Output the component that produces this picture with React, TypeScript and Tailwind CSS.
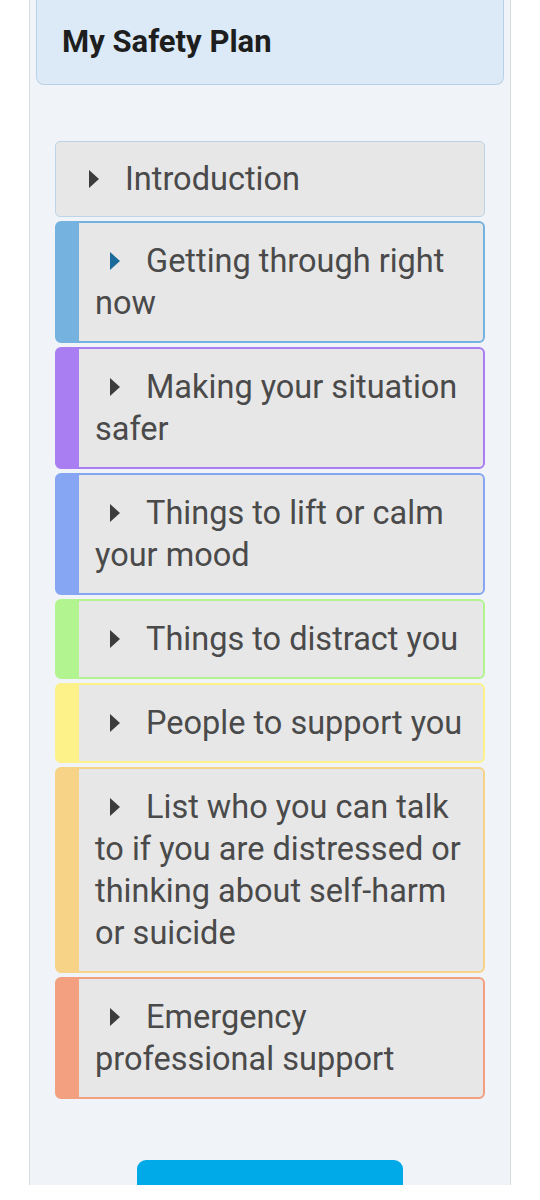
const sections = [
  { title: 'Getting through right now', bar: 'border-[#76b2e0]', arrow: 'border-l-[#1b6a9a]' },
  { title: 'Making your situation safer', bar: 'border-[#a97ef3]', arrow: 'border-l-[#3c3c3c]' },
  { title: 'Things to lift or calm your mood', bar: 'border-[#86a6f4]', arrow: 'border-l-[#3c3c3c]' },
  { title: 'Things to distract you', bar: 'border-[#b2f48f]', arrow: 'border-l-[#3c3c3c]' },
  { title: 'People to support you', bar: 'border-[#fdf189]', arrow: 'border-l-[#3c3c3c]' },
  {
    title: 'List who you can talk to if you are distressed or thinking about self-harm or suicide',
    bar: 'border-[#f7d387]',
    arrow: 'border-l-[#3c3c3c]',
  },
  { title: 'Emergency professional support', bar: 'border-[#f2a080]', arrow: 'border-l-[#3c3c3c]' },
]

function Arrow({ color }: { color: string }) {
  return (
    <span
      className={`inline-block align-middle w-0 h-0 border-y-[9px] border-y-transparent border-l-[10px] ml-[15px] mr-[26px] -mt-[5px] ${color}`}
    />
  )
}

export default function App() {
  return (
    <div className="bg-white min-h-[1200px] font-['Roboto','Liberation_Sans',sans-serif]">
      <div className="ml-[29px] w-[482px] h-[1185px] overflow-hidden border-x border-[#d9dcdf] bg-[#f0f4f8] px-[6px]">
        {/* Header */}
        <div className="h-[85px] bg-[#dceaf7] border border-t-0 border-[#b9d1e6] rounded-b-[8px] flex items-center pl-[25px]">
          <h1 className="text-[31px] font-bold text-[#1e1e1e]">My Safety Plan</h1>
        </div>

        {/* Sections */}
        <div className="mt-[56px] mx-[19px] flex flex-col gap-[4px]">
          <div className="bg-[#e7e7e7] border border-[#bcd4e6] rounded-[5px] pl-[18px] pr-[12px] py-[16px] text-[32.5px] leading-[42px] text-[#4a4a4a]">
            <Arrow color="border-l-[#3c3c3c]" />
            Introduction
          </div>
          {sections.map((s) => (
            <div
              key={s.title}
              className={`bg-[#e7e7e7] border-2 border-l-[24px] rounded-[6px] pl-[16px] pr-[10px] py-[17px] text-[32.5px] leading-[42px] text-[#4a4a4a] ${s.bar}`}
            >
              <Arrow color={s.arrow} />
              {s.title}
            </div>
          ))}
        </div>

        {/* Button */}
        <div className="mt-[61px] flex justify-center">
          <button className="w-[266px] h-[60px] bg-[#00aae8] rounded-[9px]" />
        </div>
      </div>
    </div>
  )
}
